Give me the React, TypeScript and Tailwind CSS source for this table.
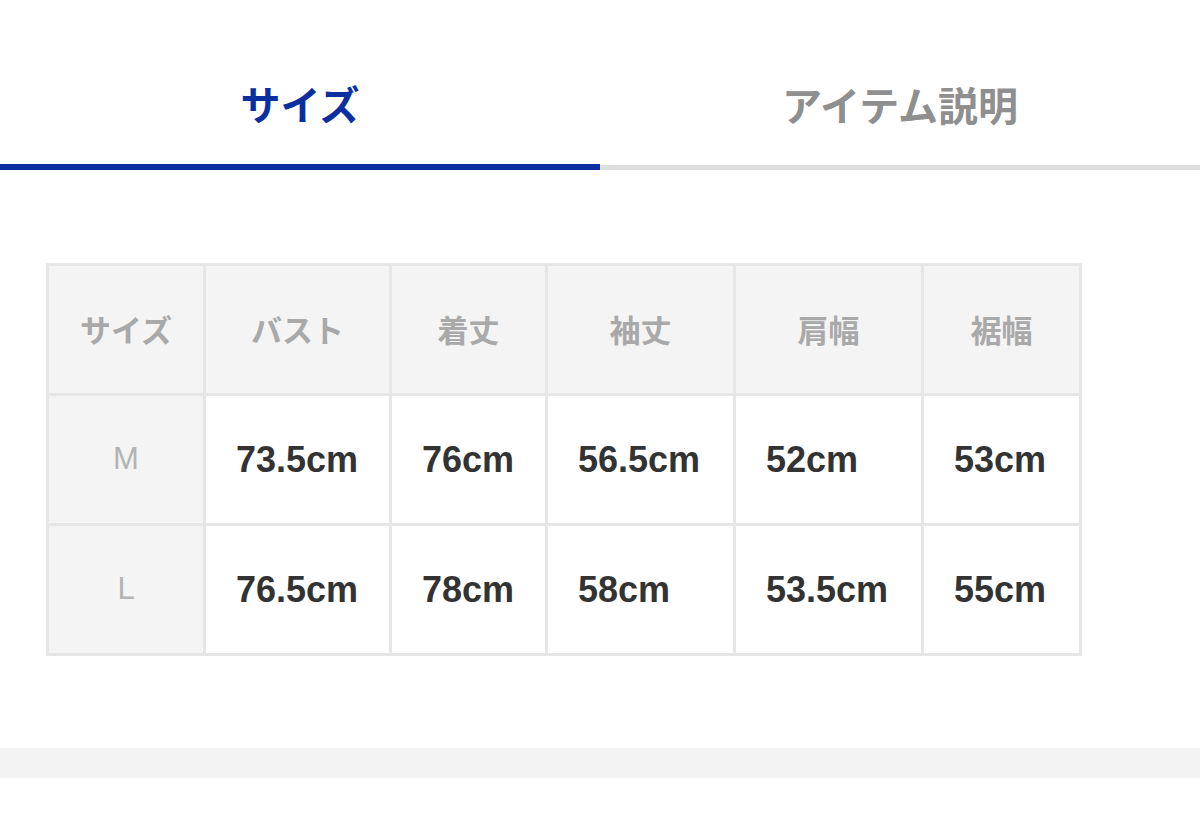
const headers = ["サイズ", "バスト", "着丈", "袖丈", "肩幅", "裾幅"]

const rows = [
  { size: "M", values: ["73.5cm", "76cm", "56.5cm", "52cm", "53cm"] },
  { size: "L", values: ["76.5cm", "78cm", "58cm", "53.5cm", "55cm"] },
]

export default function App() {
  return (
    <div
      className="w-[1200px] h-[825px] bg-white overflow-hidden"
      style={{ fontFamily: '"Liberation Sans", "Noto Sans CJK JP", sans-serif' }}
    >
      {/* tabs */}
      <div className="flex items-start">
        <div className="w-1/2 h-[170px] pt-[42px] flex items-center justify-center border-b-[6px] border-[#0b2f9f]">
          <span className="text-[40px] font-bold text-[#0b2f9f] leading-none" style={{ fontFamily: '"Noto Sans CJK JP", sans-serif' }}>
            サイズ
          </span>
        </div>
        <div className="w-1/2 h-[170px] pt-[42px] flex items-center justify-center border-b-[5px] border-[#dedede]">
          <span className="text-[40px] font-bold text-[#8f8f8f] leading-none" style={{ fontFamily: '"Noto Sans CJK JP", sans-serif' }}>
            アイテム説明
          </span>
        </div>
      </div>

      {/* size table */}
      <div className="mt-[93px] ml-[46px] w-[1036px] bg-[#e6e6e6] p-[3px] grid grid-cols-[154px_183px_153px_185px_185px_155px] auto-rows-[127px] gap-[3px]">
        {headers.map((h) => (
          <div
            key={h}
            className="bg-[#f4f4f4] flex items-center justify-center text-[31px] font-bold text-[#a9a9a9]"
            style={{ fontFamily: '"Noto Sans CJK JP", sans-serif' }}
          >
            {h}
          </div>
        ))}
        {rows.map((r) => (
          <>
            <div key={r.size} className="bg-[#f4f4f4] flex items-center justify-center text-[31px] text-[#b3b3b3]">
              {r.size}
            </div>
            {r.values.map((v, i) => (
              <div key={r.size + i} className="bg-white flex items-center pl-[30px] text-[36px] font-bold text-[#333333]">
                {v}
              </div>
            ))}
          </>
        ))}
      </div>

      <div className="mt-[92px] h-[30px] bg-[#f3f3f3]" />
    </div>
  )
}
